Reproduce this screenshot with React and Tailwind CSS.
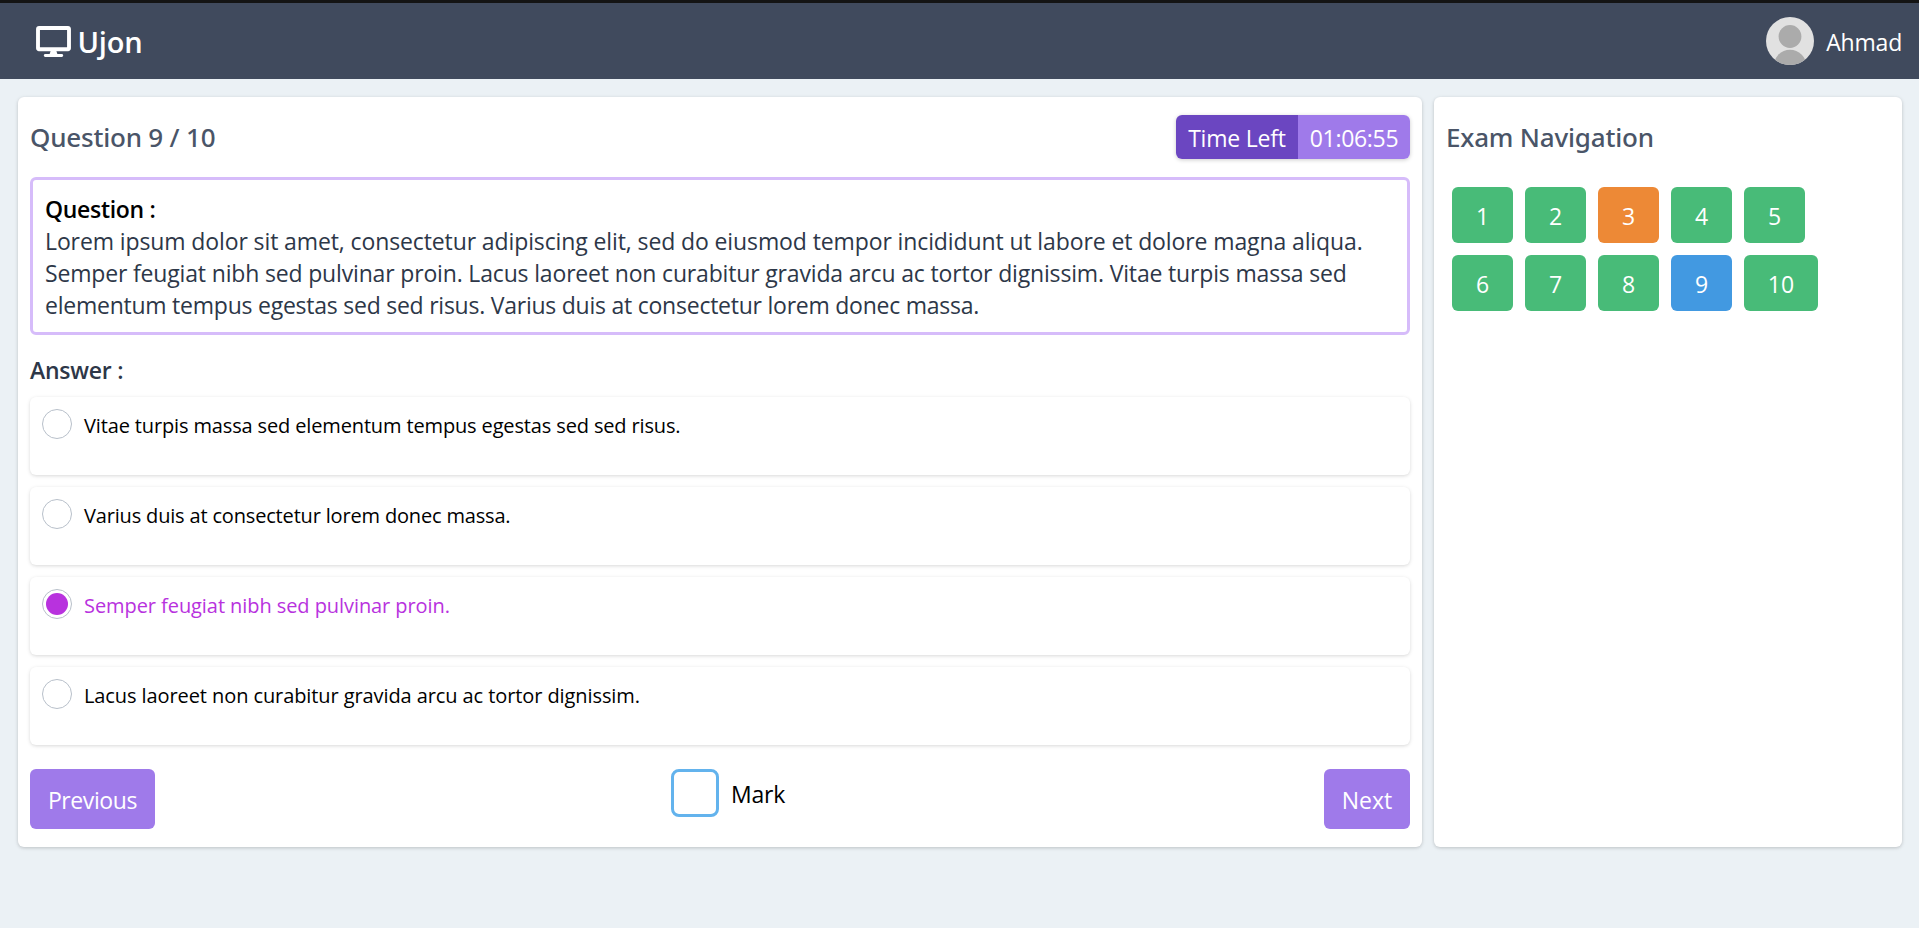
import { FaDesktop } from "react-icons/fa";

const lines = [
  ["Lorem ipsum dolor sit amet, consectetur adipiscing elit, sed do eiusmod tempor incididunt ut labore et dolore magna aliqua.", "tracking-[-0.11px]"],
  ["Semper feugiat nibh sed pulvinar proin. Lacus laoreet non curabitur gravida arcu ac tortor dignissim. Vitae turpis massa sed", "tracking-[-0.165px]"],
  ["elementum tempus egestas sed sed risus. Varius duis at consectetur lorem donec massa.", "tracking-[-0.24px]"],
];

const answers = [
  ["Vitae turpis massa sed elementum tempus egestas sed sed risus.", "tracking-[-0.14px]"],
  ["Varius duis at consectetur lorem donec massa.", "tracking-[-0.17px]"],
  ["Semper feugiat nibh sed pulvinar proin.", "tracking-[-0.07px]"],
  ["Lacus laoreet non curabitur gravida arcu ac tortor dignissim.", "tracking-[-0.09px]"],
];

const card = "rounded-md bg-white shadow-[0_1px_4px_rgba(0,0,0,0.13),0_1px_3px_rgba(0,0,0,0.08)]";
const heading = "font-['Noto_Sans',sans-serif] text-[26px] font-medium tracking-[-0.2px] text-[#4a5568]";

function Avatar() {
  return (
    <svg viewBox="0 0 48 48" className="size-12 rounded-full">
      <rect width="48" height="48" fill="#e1e1e1" />
      <circle cx="24" cy="19.5" r="11.4" fill="#ababab" />
      <circle cx="24" cy="49" r="16.3" fill="#ababab" />
    </svg>
  );
}

function Header() {
  return (
    <header className="flex h-[79px] items-center justify-between border-t-[3px] border-[#141414] bg-[#404a5d] pr-[17px] pl-[35.5px] text-white">
      <div className="flex items-center gap-[7px]">
        <FaDesktop width="35" height="31" className="h-[31px] w-[35px]" />
        <span className="pt-0.5 text-[29px] leading-[38px] font-semibold tracking-[-0.2px]">Ujon</span>
      </div>
      <div className="flex items-center gap-3">
        <Avatar />
        <span className="pt-0.5 text-[23px] leading-8 tracking-[-0.2px]">Ahmad</span>
      </div>
    </header>
  );
}

function Answer({ text, tracking, selected }) {
  return (
    <label className="flex h-[78px] items-start gap-3 rounded-md bg-white p-3 shadow-[0_1px_4px_rgba(0,0,0,0.1),0_1px_3px_rgba(0,0,0,0.06)]">
      <span className="flex size-[30px] items-center justify-center rounded-full border border-[#b8c0ca]">
        {selected && <span className="size-[22px] rounded-full bg-[#b832de]" />}
      </span>
      <span className={`pt-0.5 text-[20px] leading-[30px] whitespace-nowrap ${tracking} ${selected ? "text-[#b832de]" : "text-black"}`}>
        {text}
      </span>
    </label>
  );
}

function NavButton({ n }) {
  const color = n === 3 ? "bg-[#ed8936]" : n === 9 ? "bg-[#4299e1]" : "bg-[#48bb78]";
  return (
    <button className={`h-14 rounded-md pt-0.5 text-[23px] text-white ${n === 10 ? "w-[74px]" : "w-[61px]"} ${color}`}>{n}</button>
  );
}

export default function App() {
  return (
    <div className="min-h-screen bg-[#ebf1f5] font-['Open_Sans',sans-serif] text-[23px] leading-8">
      <Header />
      <main className="flex gap-3 pt-[18px] pr-[17px] pl-[18px]">
        <section className={`flex h-[750px] w-[1404px] flex-col px-3 pt-[18px] ${card}`}>
          <div className="flex h-11 items-center justify-between">
            <h1 className={heading}>Question 9 / 10</h1>
            <div className="flex h-11 overflow-hidden rounded-md text-white shadow-[0_1px_4px_rgba(0,0,0,0.2)]">
              <span className="flex w-[122px] items-center justify-center bg-[#6b46c1] pt-0.5 tracking-[-0.2px]">Time Left</span>
              <span className="flex w-[112px] items-center justify-center bg-[#9f7aea] pt-0.5 tracking-[-0.3px]">01:06:55</span>
            </div>
          </div>
          <div className="mt-[18px] h-[158px] rounded-md border-[3px] border-[#d6bcfa] px-3 pt-[13px] whitespace-nowrap text-[#2d3748]">
            <h2 className="font-semibold tracking-[-0.3px] text-black">Question :</h2>
            {lines.map(([text, tracking]) => (
              <p key={text} className={tracking}>{text}</p>
            ))}
          </div>
          <h2 className="flex h-[62px] items-center pt-2 font-semibold tracking-[-0.25px] text-[#2d3748]">Answer :</h2>
          <div className="flex flex-col gap-3">
            {answers.map(([text, tracking], i) => (
              <Answer key={text} text={text} tracking={tracking} selected={i === 2} />
            ))}
          </div>
          <div className="mt-6 flex items-start justify-between">
            <button className="h-[60px] w-[125px] rounded-md bg-[#9f7aea] pt-0.5 tracking-[-0.4px] text-white">Previous</button>
            <label className="flex w-[137px] items-center gap-3 text-black">
              <span className="size-12 rounded-lg border-[3px] border-[#63b3ed]" />
              <span className="pt-0.5 tracking-[-0.2px]">Mark</span>
            </label>
            <button className="h-[60px] w-[86px] rounded-md bg-[#9f7aea] pt-0.5 text-white">Next</button>
          </div>
        </section>
        <aside className={`h-[750px] w-[468px] px-3 pt-[18px] ${card}`}>
          <h2 className={`flex h-11 items-center ${heading}`}>Exam Navigation</h2>
          <div className="mt-7 flex w-[400px] flex-wrap gap-3 pl-1.5">
            {[1, 2, 3, 4, 5, 6, 7, 8, 9, 10].map((n) => (
              <NavButton key={n} n={n} />
            ))}
          </div>
        </aside>
      </main>
    </div>
  );
}
